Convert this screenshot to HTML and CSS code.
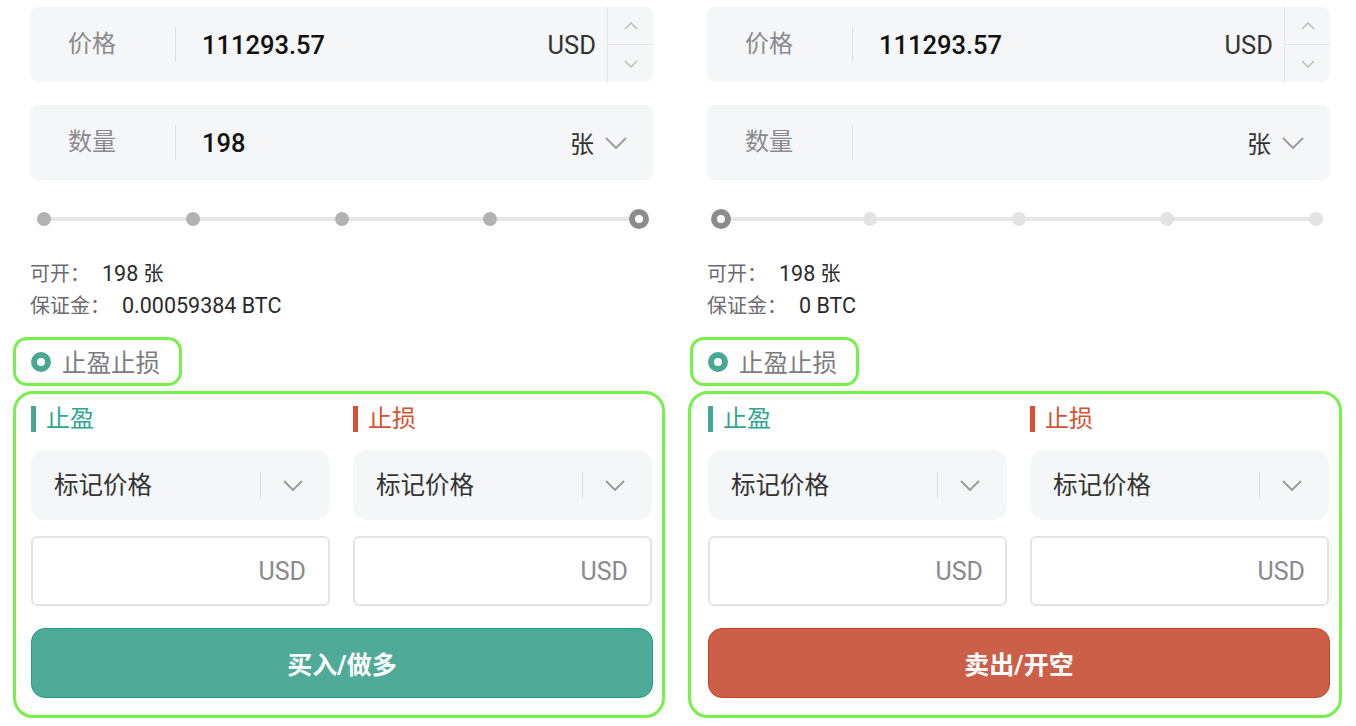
FILE: index.html
```html
<!DOCTYPE html>
<html lang="zh-CN">
<head>
<meta charset="utf-8">
<title>下单</title>
<link rel="stylesheet" href="styles.css">
</head>
<body>
<div class="page">
  <section class="panel">
    <div class="field">
      <span class="field-label">价格</span>
      <span class="field-value">111293.57</span>
      <span class="field-unit">USD</span>
      <div class="spinner">
        <div class="spin-btn"><svg width="14" height="8" viewBox="0 0 14 8"><polyline points="1,7 7,1 13,7" fill="none" stroke="#b9b9bd" stroke-width="1.4"/></svg></div>
        <div class="spin-btn"><svg width="14" height="8" viewBox="0 0 14 8"><polyline points="1,1 7,7 13,1" fill="none" stroke="#b9b9bd" stroke-width="1.4"/></svg></div>
      </div>
    </div>
    <div class="field field-qty">
      <span class="field-label">数量</span>
      <span class="field-value">198</span>
      <span class="field-unit unit-cjk">张</span>
      <svg class="chev" width="22" height="12" viewBox="0 0 22 12"><polyline points="1,1 11,11 21,1" fill="none" stroke="#9a9a9e" stroke-width="1.8"/></svg>
    </div>
    <div class="slider">
      <span class="dot dot-on"></span>
      <span class="dot dot-on"></span>
      <span class="dot dot-on"></span>
      <span class="dot dot-on"></span>
      <span class="dot dot-active"></span>
    </div>
    <div class="info">
      <div class="info-row"><span class="info-label">可开：</span><span class="info-val">198 <span class="cjk">张</span></span></div>
      <div class="info-row"><span class="info-label">保证金：</span><span class="info-val">0.00059384 BTC</span></div>
    </div>
    <div class="tpsl-toggle">
      <span class="radio"></span><span class="tpsl-text">止盈止损</span>
    </div>
    <div class="tpsl-box">
      <div class="tpsl-grid">
        <div class="tpsl-col">
          <div class="tag tag-tp">止盈</div>
          <div class="select"><span class="select-text">标记价格</span><span class="select-sep"></span><svg class="select-chev" width="20" height="11" viewBox="0 0 20 11"><polyline points="1,1 10,10 19,1" fill="none" stroke="#9c9ca0" stroke-width="2"/></svg></div>
          <div class="price-input"><span class="unit">USD</span></div>
        </div>
        <div class="tpsl-col">
          <div class="tag tag-sl">止损</div>
          <div class="select"><span class="select-text">标记价格</span><span class="select-sep"></span><svg class="select-chev" width="20" height="11" viewBox="0 0 20 11"><polyline points="1,1 10,10 19,1" fill="none" stroke="#9c9ca0" stroke-width="2"/></svg></div>
          <div class="price-input"><span class="unit">USD</span></div>
        </div>
      </div>
      <button class="action action-buy">买入/做多</button>
    </div>
  </section>

  <section class="panel panel-right">
    <div class="field">
      <span class="field-label">价格</span>
      <span class="field-value">111293.57</span>
      <span class="field-unit">USD</span>
      <div class="spinner">
        <div class="spin-btn"><svg width="14" height="8" viewBox="0 0 14 8"><polyline points="1,7 7,1 13,7" fill="none" stroke="#b9b9bd" stroke-width="1.4"/></svg></div>
        <div class="spin-btn"><svg width="14" height="8" viewBox="0 0 14 8"><polyline points="1,1 7,7 13,1" fill="none" stroke="#b9b9bd" stroke-width="1.4"/></svg></div>
      </div>
    </div>
    <div class="field field-qty">
      <span class="field-label">数量</span>
      <span class="field-value"></span>
      <span class="field-unit unit-cjk">张</span>
      <svg class="chev" width="22" height="12" viewBox="0 0 22 12"><polyline points="1,1 11,11 21,1" fill="none" stroke="#9a9a9e" stroke-width="1.8"/></svg>
    </div>
    <div class="slider">
      <span class="dot dot-active"></span>
      <span class="dot"></span>
      <span class="dot"></span>
      <span class="dot"></span>
      <span class="dot"></span>
    </div>
    <div class="info">
      <div class="info-row"><span class="info-label">可开：</span><span class="info-val">198 <span class="cjk">张</span></span></div>
      <div class="info-row"><span class="info-label">保证金：</span><span class="info-val">0 BTC</span></div>
    </div>
    <div class="tpsl-toggle">
      <span class="radio"></span><span class="tpsl-text">止盈止损</span>
    </div>
    <div class="tpsl-box">
      <div class="tpsl-grid">
        <div class="tpsl-col">
          <div class="tag tag-tp">止盈</div>
          <div class="select"><span class="select-text">标记价格</span><span class="select-sep"></span><svg class="select-chev" width="20" height="11" viewBox="0 0 20 11"><polyline points="1,1 10,10 19,1" fill="none" stroke="#9c9ca0" stroke-width="2"/></svg></div>
          <div class="price-input"><span class="unit">USD</span></div>
        </div>
        <div class="tpsl-col">
          <div class="tag tag-sl">止损</div>
          <div class="select"><span class="select-text">标记价格</span><span class="select-sep"></span><svg class="select-chev" width="20" height="11" viewBox="0 0 20 11"><polyline points="1,1 10,10 19,1" fill="none" stroke="#9c9ca0" stroke-width="2"/></svg></div>
          <div class="price-input"><span class="unit">USD</span></div>
        </div>
      </div>
      <button class="action action-sell">卖出/开空</button>
    </div>
  </section>
</div>
</body>
</html>
```

FILE: styles.css
```css
* { box-sizing: border-box; }

html, body {
  margin: 0;
  padding: 0;
  background: #ffffff;
}

body {
  font-family: Roboto, "Noto Sans CJK SC", sans-serif;
  color: #222;
}

.page {
  display: flex;
  width: 1356px;
  height: 726px;
  overflow: hidden;
}

.panel {
  width: 677px;
  flex: none;
  padding: 7px 24px 0 30px;
  display: flex;
  flex-direction: column;
}

/* top input fields */
.field {
  height: 75px;
  background: #f5f6f8;
  border-radius: 8px;
  display: flex;
  align-items: center;
  padding-left: 38px;
  font-size: 24px;
}

.field-qty {
  margin-top: 23px;
  padding-right: 26px;
}

.field-label {
  color: #8a8a8e;
  width: 108px;
  height: 35px;
  line-height: 35px;
  border-right: 1.5px solid #dedfe2;
  flex: none;
}

.field-value {
  flex: 1;
  padding-left: 26px;
  color: #111;
  font-weight: 500;
  font-size: 25.5px;
}

.field-unit {
  color: #333;
  font-size: 25.5px;
}

.unit-cjk {
  font-size: 24px;
}

.spinner {
  margin-left: 11px;
  width: 46px;
  height: 75px;
  border-left: 1.5px solid #e4e5e8;
  display: flex;
  flex-direction: column;
}

.spin-btn {
  flex: 1;
  display: flex;
  align-items: center;
  justify-content: center;
}

.spin-btn + .spin-btn {
  border-top: 1.5px solid #e4e5e8;
}

.chev {
  margin-left: 11px;
}

/* slider */
.slider {
  margin-top: 28px;
  height: 22px;
  display: flex;
  justify-content: space-between;
  align-items: center;
  background: linear-gradient(#e6e6e9, #e6e6e9) no-repeat center / calc(100% - 28px) 4px;
}

.dot {
  width: 14px;
  height: 14px;
  margin: 0 7px;
  border-radius: 50%;
  background: #e3e3e5;
}

.dot-on {
  background: #b2b2b4;
}

.dot-active {
  width: 20px;
  height: 20px;
  margin: 0 4px;
  background: #fff;
  border: 6px solid #8c8c8e;
}

/* info */
.info {
  margin-top: 28px;
  font-size: 20px;
  line-height: 32px;
}

.info-row {
  display: flex;
  align-items: baseline;
}

.info-label {
  color: #6b6b6f;
  margin-right: 12px;
}

.info-val {
  color: #2a2a2a;
  font-size: 21.5px;
}

.cjk {
  font-size: 20px;
}

/* TP/SL toggle */
.tpsl-toggle {
  margin-top: 15px;
  margin-left: -17px;
  width: 169px;
  height: 49px;
  border: 3px solid #78f04c;
  border-radius: 14px;
  display: flex;
  align-items: center;
  padding-left: 15px;
}

.radio {
  width: 20px;
  height: 20px;
  border-radius: 50%;
  border: 6px solid #48a894;
  background: #fff;
  flex: none;
}

.tpsl-text {
  margin-left: 11px;
  font-size: 24.5px;
  color: #7c7c80;
}

.tpsl-box {
  margin-top: 5px;
  margin-left: -17px;
  width: 652px;
  height: 327px;
  border: 3px solid #78f04c;
  border-radius: 20px;
  padding: 12px 10px 0 15px;
}

.panel-right .tpsl-box {
  margin-left: -19px;
  width: 654px;
  padding-left: 17px;
}

.tpsl-grid {
  display: grid;
  grid-template-columns: 299px 299px;
  column-gap: 23px;
}

.tpsl-col {
  display: flex;
  flex-direction: column;
}

.tag {
  height: 26px;
  line-height: 26px;
  font-size: 24px;
  border-left: 5px solid;
  padding-left: 10px;
}

.tag-tp {
  color: #2fa68d;
  border-color: #45a892;
}

.tag-sl {
  color: #d9512f;
  border-color: #d6512f;
}

.select {
  margin-top: 18px;
  height: 70px;
  background: #f5f6f8;
  border-radius: 14px;
  display: flex;
  align-items: center;
  padding-left: 23px;
}

.select-text {
  flex: 1;
  font-size: 24.5px;
  color: #333;
  margin-top: -3px;
}

.select-sep {
  width: 1.5px;
  height: 26px;
  background: #dcdde0;
}

.select-chev {
  margin: 0 27px 0 22px;
}

.price-input {
  margin-top: 16px;
  height: 70px;
  border: 2px solid #e4e4e6;
  border-radius: 6px;
  display: flex;
  align-items: center;
  justify-content: flex-end;
  padding-right: 22px;
}

.unit {
  font-size: 25px;
  color: #8a8a8e;
}

.action {
  display: block;
  margin-top: 22px;
  width: 622px;
  height: 70px;
  border-radius: 14px;
  font-family: Roboto, "Noto Sans CJK SC", sans-serif;
  font-size: 25px;
  font-weight: 700;
  color: #fff;
  cursor: pointer;
}

.action-buy {
  background: #4fab98;
  border: 1.5px solid #1e9c85;
}

.action-sell {
  background: #cb5f48;
  border: 1.5px solid #c9411e;
}
```
